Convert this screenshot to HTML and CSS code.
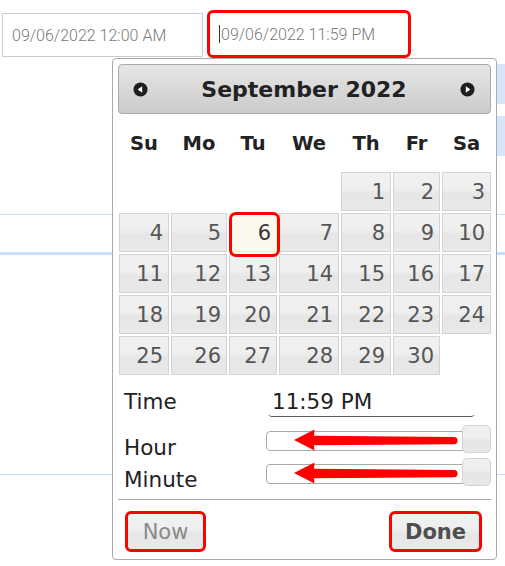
FILE: index.html
```html
<!DOCTYPE html>
<html>
<head>
<meta charset="utf-8">
<link rel="stylesheet" href="styles.css">
</head>
<body>
<div class="page">
  <div class="inputs">
    <div class="field plain">09/06/2022 12:00 AM</div>
    <div class="field active"><span class="caret"></span>09/06/2022 11:59 PM</div>
  </div>
  <div class="bg">
    <div class="side"><div class="blk"></div><div class="blk"></div></div>
    <div class="rule r1"></div>
    <div class="rule r2"></div>
    <div class="rule r3"></div>
  </div>

  <div class="picker">
    <div class="header">
      <svg class="nav" width="15" height="15" viewBox="0 0 16 16"><circle cx="8" cy="8" r="7.5" fill="#1e1e1e"/><path d="M5 8 L9.8 4.6 V11.4 Z" fill="#fff"/></svg>
      <div class="title">September 2022</div>
      <svg class="nav" width="15" height="15" viewBox="0 0 16 16"><circle cx="8" cy="8" r="7.5" fill="#1e1e1e"/><path d="M11 8 L6.2 4.6 V11.4 Z" fill="#fff"/></svg>
    </div>
    <div class="dow">
      <span>Su</span><span>Mo</span><span>Tu</span><span>We</span><span>Th</span><span>Fr</span><span>Sa</span>
    </div>
    <div class="days">
      <div class="d first">1</div><div class="d">2</div><div class="d">3</div>
      <div class="d">4</div><div class="d">5</div><div class="d today">6</div><div class="d">7</div><div class="d">8</div><div class="d">9</div><div class="d">10</div>
      <div class="d">11</div><div class="d">12</div><div class="d">13</div><div class="d">14</div><div class="d">15</div><div class="d">16</div><div class="d">17</div>
      <div class="d">18</div><div class="d">19</div><div class="d">20</div><div class="d">21</div><div class="d">22</div><div class="d">23</div><div class="d">24</div>
      <div class="d">25</div><div class="d">26</div><div class="d">27</div><div class="d">28</div><div class="d">29</div><div class="d">30</div>
    </div>

    <div class="tp">
      <div class="row time">
        <div class="lbl">Time</div>
        <div class="tval">11:59 PM</div>
      </div>
      <div class="row hour">
        <div class="lbl">Hour</div>
        <div class="slider">
          <div class="track"></div>
          <div class="handle"></div>
          <svg class="arrow" width="227" height="28" viewBox="0 0 227 28"><path d="M28 15 L48.5 4.5 L48 10.8 L188 12 A3.6 3.6 0 0 1 188 19.2 L48 20.2 L48.5 25.5 Z" fill="#ff0000"/></svg>
        </div>
      </div>
      <div class="row minute">
        <div class="lbl">Minute</div>
        <div class="slider">
          <div class="track"></div>
          <div class="handle"></div>
          <svg class="arrow" width="227" height="28" viewBox="0 0 227 28"><path d="M28 15 L48.5 4.5 L48 10.8 L188 12 A3.6 3.6 0 0 1 188 19.2 L48 20.2 L48.5 25.5 Z" fill="#ff0000"/></svg>
        </div>
      </div>
    </div>

    <div class="sep"></div>
    <div class="btns">
      <div class="btn now">Now</div>
      <div class="btn done">Done</div>
    </div>
  </div>
</div>
</body>
</html>
```
FILE: styles.css
```css
html, body {
  margin: 0;
  padding: 0;
  background: #fff;
}
body {
  font-family: "DejaVu Sans", Verdana, sans-serif;
}
.page {
  position: relative;
  width: 505px;
  height: 566px;
  overflow: hidden;
}

/* inputs */
.inputs {
  display: flex;
  align-items: flex-start;
  padding-top: 10px;
  height: 58px;
  box-sizing: border-box;
}
.field {
  box-sizing: border-box;
  font-family: Roboto, "Liberation Sans", sans-serif;
  font-weight: 300;
  font-size: 16px;
  color: #7a7a7a;
  display: flex;
  align-items: center;
  white-space: nowrap;
}
.field.plain {
  margin: 3px 0 0 2px;
  width: 201px;
  height: 44px;
  border: 1px solid #cccccc;
  padding-left: 9px;
}
.field.active {
  margin-left: 4px;
  width: 204px;
  height: 48px;
  border: 3px solid #ff0000;
  border-radius: 6px;
  padding-left: 9px;
}
.caret {
  width: 1px;
  height: 18px;
  background: #333;
  margin-right: 1px;
}

/* page background under popup */
.side {
  display: flex;
  flex-direction: column;
  align-items: flex-end;
  gap: 12px;
  margin-top: 6px;
}
.blk {
  width: 8px;
  height: 40px;
  background: #d6e5fb;
}
.rule { background: #cadef8; }
.r1 { height: 1px; margin-top: 58px; }
.r2 { height: 3px; margin-top: 37px; }
.r3 { height: 1px; margin-top: 219px; }

/* datepicker */
.picker {
  position: absolute;
  left: 112px;
  top: 58px;
  width: 385px;
  height: 502px;
  box-sizing: border-box;
  border: 1px solid #aaaaaa;
  border-radius: 4px;
  background: #fff;
  padding: 5px;
}
.header {
  height: 50px;
  box-sizing: border-box;
  border: 1px solid #aaaaaa;
  border-radius: 4px;
  background: linear-gradient(#e6e6e6, #cbcbcb);
  display: flex;
  align-items: center;
  justify-content: space-between;
  padding: 0 15px 0 14px;
}
.nav { display: block; }
.title {
  font-weight: bold;
  font-size: 22px;
  color: #222;
  padding-top: 1px;
}
.dow {
  display: grid;
  grid-template-columns: 50px 56px 48px 60px 50px 47px 49px;
  column-gap: 2px;
  padding-left: 1px;
  height: 58px;
  align-items: center;
  text-align: center;
  font-weight: bold;
  font-size: 19.5px;
  color: #222;
}
.days {
  display: grid;
  grid-template-columns: 50px 56px 48px 60px 50px 47px 49px;
  column-gap: 2px;
  row-gap: 2px;
  grid-auto-rows: 39px;
  padding-left: 1px;
}
.d {
  position: relative;
  box-sizing: border-box;
  border: 1px solid #d3d3d3;
  background: linear-gradient(to bottom, #f1f1f1 0%, #efefef 44%, #e6e6e6 56%, #e9e9e9 100%);
  color: #555;
  font-size: 21px;
  display: flex;
  align-items: center;
  justify-content: flex-end;
  padding-right: 5px;
}
.d.first { grid-column-start: 5; }
.d.today {
  background: #fbf9ee;
  border-color: #fcefa1;
  color: #363636;
  z-index: 1;
}
.d.today::after {
  content: "";
  position: absolute;
  top: -2px;
  left: -1px;
  right: -4px;
  bottom: -6px;
  border: 3px solid #ff0000;
  border-radius: 7px;
}

/* time section */
.tp { margin-top: 12px; }
.row { display: flex; }
.lbl {
  width: 149px;
  box-sizing: border-box;
  padding-left: 6px;
  font-size: 21.5px;
  line-height: 26px;
  color: #222;
}
.row.time { height: 30px; }
.row.time .lbl { line-height: 29px; }
.tval {
  width: 209px;
  height: 30px;
  box-sizing: border-box;
  border-bottom: 1px solid #5a5a5a;
  border-left: 1px solid transparent;
  border-right: 1px solid transparent;
  border-radius: 0 0 5px 5px;
  padding-left: 4px;
  font-size: 21.5px;
  line-height: 29px;
  color: #222;
}
.row.hour { height: 36px; margin-top: 2px; }
.row.minute { height: 36px; }
.row.hour .lbl { margin-top: 15.5px; }
.row.minute .lbl { margin-top: 11.5px; }
.slider {
  position: relative;
  width: 227px;
  height: 28px;
}
.row.hour .slider { margin-top: 6px; }
.row.minute .slider { margin-top: 3px; }
.track {
  margin-top: 6px;
  width: 214px;
  height: 20px;
  box-sizing: border-box;
  border: 1px solid #aaaaaa;
  border-radius: 4px;
  background: #fff;
}
.handle {
  position: absolute;
  right: 0;
  top: 0;
  width: 29px;
  height: 28px;
  box-sizing: border-box;
  border: 1px solid #d3d3d3;
  border-radius: 5px;
  background: linear-gradient(to bottom, #f0f0f0 0%, #eeeeee 44%, #e6e6e6 56%, #e8e8e8 100%);
}
.arrow {
  position: absolute;
  left: 0;
  top: 0;
}

.sep {
  margin-top: 8px;
  height: 1px;
  background: #aaaaaa;
}
.btns {
  display: flex;
  justify-content: space-between;
  margin-top: 11px;
  padding: 0 9px 0 7px;
}
.btn {
  height: 41px;
  box-sizing: border-box;
  border: 3px solid #ff0000;
  border-radius: 6px;
  background: linear-gradient(to bottom, #f1f1f1 0%, #efefef 44%, #e6e6e6 56%, #e9e9e9 100%);
  font-size: 21px;
  display: flex;
  align-items: center;
  justify-content: center;
}
.btn.now {
  width: 81px;
  color: #8a8a8a;
}
.btn.done {
  width: 93px;
  font-weight: bold;
  color: #4f4f4f;
}
```
